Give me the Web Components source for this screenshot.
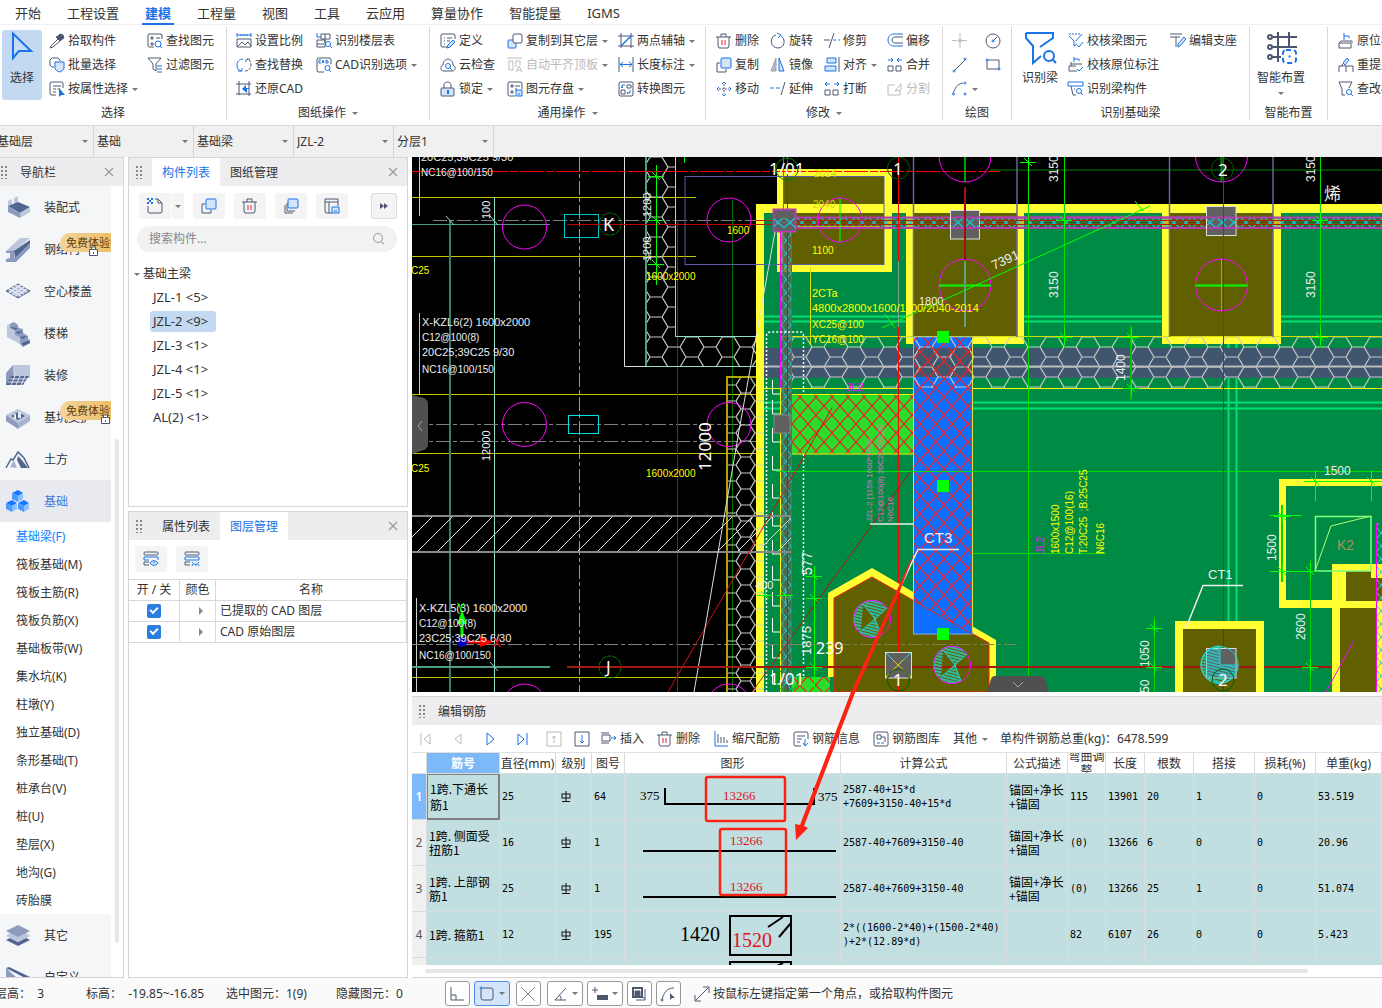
<!DOCTYPE html>
<html lang="zh-CN">
<head>
<meta charset="utf-8">
<title>建模</title>
<style>
html, body {
    margin: 0;
    height: 100%;
    overflow: hidden;
    background: #fff;
    color: #333;
    font: 12px/16px "Noto Sans", "Noto Sans CJK SC", sans-serif;
}
</style>
</head>
<body>
<cad-app></cad-app>

<script>
// ---------- shared ----------
const RESET = `
*, *::before { box-sizing: border-box; }
button, select, input { font: inherit; color: inherit; margin: 0; padding: 0; border: 0; background: none; }
button { cursor: pointer; }
`;

function define(name, css, html) {
    customElements.define(name, class extends HTMLElement {
        constructor() {
            super();
            this.attachShadow({ mode: 'open' });
        }
        connectedCallback() {
            const markup = typeof html === 'function' ? html(this) : html;
            this.shadowRoot.innerHTML = `<style>${RESET}${css}</style>${markup}`;
        }
    });
}

// ---------- icons: dark stroke by default, .b blue, .f pale fill, .w white fill ----------
const ICONS = {
    pointer: [32, '<path class="b" stroke-width="2" fill="#c6dcf7" d="M7 2.500V27l6-7h12z"/>'],
    picker: [16, '<path fill="#4d5870" d="M9 3l2-2 3 1 1 3-3 2-1 1-4-4z"/><path d="M9 6l-7 7-1 2 3-1 7-6"/>'],
    batch: [16, '<path d="M5 10H3L1 8V3l2-2h6l2 2v1"/><path class="b f" d="M6 5h9v6c0 2-2 3-4.500 4C8 14 6 13 6 11z"/>'],
    prop: [16, '<path d="M7 14H2l-1-1V2l1-1h11l1 1v5M4 5h8M4 8h3M8.500 8H11M4 11h3"/><path fill="#1a73e8" stroke="none" d="M10 7v9l2.500-2H16z"/>'],
    find: [16, '<path d="M7 14H2l-1-1V2l1-1h12l1 1v4M4 4h2v2H4zM9 5h4M4 10h2v2H4z"/><circle class="b" cx="11" cy="11" r="3"/><path class="b" d="M13 13l2 2"/>'],
    filter: [16, '<path d="M1 1h13L9 7v7l-3-2V7z"/><path class="b" d="M10 9h5M10 12h5M10 15h5"/>'],
    scale: [16, '<path class="b" d="M1 2h14M1 0v4M15 0v4M5 1v2M8 1v2M11 1v2"/><path d="M1 6h14v8H1zM2 13l4-4 3 3 3-3 3 4"/>'],
    swap: [16, '<path class="b" d="M7 2C3 2 1 5 1 8s1 5 4 6M2 14h4v-3"/><path stroke-dasharray="3 1" d="M9 14c4 0 6-3 6-6s-1-5-4-6M14 2h-4v3"/>'],
    restore: [16, '<path d="M3 0v14M0 3h15M0 13h15M13 0v15"/><path fill="#1a73e8" stroke="none" d="M6 8l4-4v3h3v1h-2v4z"/>'],
    floors: [16, '<path class="b" d="M1 0v4h4"/><path d="M5 1h9v5H5zM9 1v9M1 7h8v7H1zM1 11h7"/><circle class="b" cx="12" cy="11" r="2.500"/><path class="b" d="M14 13l2 2"/>'],
    cadopt: [16, '<path d="M8 15H2l-1-1V2l1-1h12l1 1v5"/><path class="b" d="M5 3H3v3h2M6 6l1-3 1 3M10 3v3h2V4z"/><circle class="b" cx="11.500" cy="11" r="2.500"/><path class="b" d="M13 13l2 2"/>'],
    define: [16, '<path d="M7 14H2l-1-1V2l1-1h12l1 1v4M4 5h1M7 5h5M4 8h1M7 8h3M4 11h1"/><path class="b f" d="M8 12l5-5 2 2-5 5-3 1z"/>'],
    cloud: [16, '<path d="M4 14c-4 0-4-5-1-6 0-4 3-6 5-6s5 2 5 6c3 1 3 6-1 6z"/><circle class="b" cx="8" cy="9" r="2.500"/><path class="b" d="M10 11l2 2"/>'],
    lock: [16, '<path d="M4 7V4c0-4 7-4 7 0v3"/><rect class="f" x="1" y="7" width="13" height="8" rx="1"/><path class="b" stroke-width="2" d="M8 9v4"/>'],
    copyfloor: [16, '<rect class="f b" x="1" y="7" width="8" height="8" rx="1"/><path fill="#fff" d="M6 2l1-1h7l1 1v7l-1 1H7L6 9z"/>'],
    aligntop: [16, '<path d="M0 1h15M2 4h4v9H2zM9 10V4h4v4M9 15l3-6 3 6M10 13h4"/>'],
    store: [16, '<path d="M8 15H2l-1-1V2l1-1h12l1 1v6M4 4h2v2H4zM8 5h5M4 10h2v2H4zM8 8h2"/><path class="b f" d="M9 9h6v6H9zM11 13h2"/>'],
    twopoint: [16, '<path d="M3 0v15M13 0v15M0 3h16M0 13h16"/><path class="b" stroke-width="1.500" d="M3 13L13 3"/>'],
    length: [16, '<path d="M1 0v15M15 0v15"/><path class="b" d="M2 7.500h12M5 5L2 7.500 5 10M11 5l3 2.500-3 2.500"/>'],
    convert: [16, '<path d="M2 1h12l1 1v12l-1 1H2l-1-1V2zM9 4h4v3H9zM3 9h4v4H3z"/><path class="b" d="M7 4H4v3M3 6l1 1 1-1M9 12h3V9M10 13l-1-1 1-1"/>'],
    trash: [16, '<path d="M0 4h15M5 4V1h5v3M2 4v9l1 2h9l1-2V4"/><path stroke="#d9222a" d="M6 7v5M9 7v5"/>'],
    copy: [16, '<path d="M4 6H1v9h9v-3"/><rect class="b f" x="5" y="1" width="10" height="10" rx="1"/>'],
    move: [16, '<path stroke-dasharray="2 1" d="M8 3v10M3 8h10"/><path class="b" d="M6 3l2-2 2 2M6 13l2 2 2-2M3 6L1 8l2 2M13 6l2 2-2 2"/>'],
    rotate: [16, '<path d="M6 2C-1 4 0 15 8 15c7 0 8-9 3-12"/><path class="b" d="M7 0l4 2-3 3"/>'],
    mirror: [16, '<path fill="#b4bac6" stroke="#9aa2b1" d="M6 1v13H1z"/><path class="b f" d="M9 1v13h5z"/>'],
    extend: [16, '<path class="b" stroke-dasharray="4 2" d="M0 7h11"/><path d="M15 1l-4 13"/>'],
    trim: [16, '<path d="M0 7h6M10 0L5 15"/><path class="b" stroke-dasharray="3 2" d="M9 7h7"/>'],
    align: [16, '<path d="M15 0v15"/><path class="b f" d="M3 1h9v5H3zM1 9h11v5H1z"/>'],
    split2: [16, '<path d="M1 9h5v5H1zM9 9h5v5H9z"/><path class="b" d="M1 3h5M3 1L1 3l2 2M15 3h-5M13 1l2 2-2 2"/>'],
    offset: [16, '<path class="b" d="M16 1H7C-1 1-1 13 7 13h9"/><path d="M16 4H8c-4 0-4 6 0 6h8"/>'],
    merge: [16, '<path d="M1 9h5v5H1zM9 9h5v5H9z"/><path class="b" d="M1 3h5M4 1l2 2-2 2M15 3h-5M12 1l-2 2 2 2"/>'],
    divide: [16, '<path d="M8 4H1v10h12v-4M8 10l6-7v6z"/>'],
    point: [16, '<path stroke="#bbb" d="M8 0v5M8 10v5M0 7.500h5M10 7.500h5"/><circle fill="#bbb" stroke="none" cx="8" cy="7.500" r="2"/>'],
    line: [16, '<path d="M2 14L13 3"/><circle class="b w" cx="2" cy="14" r="1"/><circle class="b w" cx="13" cy="2" r="1"/>'],
    arc: [16, '<path d="M1 13C3 7 5 3 11 2"/><circle class="b w" cx="1.500" cy="13" r="1"/><circle class="b w" cx="13" cy="2" r="1"/><circle class="b w" cx="13" cy="13" r="1"/>'],
    circle: [16, '<circle cx="8" cy="8" r="7"/><path d="M8 8l4-4"/><circle class="b" cx="8" cy="8" r="1"/>'],
    rect: [16, '<path d="M2 3h12v9H2z"/><circle class="b w" cx="2" cy="3" r="1"/><circle class="b w" cx="14" cy="12" r="1"/>'],
    beam: [32, '<path class="b" stroke-width="2" d="M2 2h27v5L16 16M2 2v5l7 8v17l8-7"/><circle class="b" stroke-width="2" cx="25" cy="25" r="5"/><path class="b" stroke-width="2" d="M28 28l4 4"/>'],
    checkbeam: [16, '<path class="b" stroke-dasharray="2 1" d="M1 1h12"/><path class="b" d="M1 3l5 5v5l3-2M14 1L8 8M9 12l2 2 4-5"/>'],
    checkpos: [16, '<path class="b" d="M6 5V0M6 2h5v2"/><path d="M3 7h11M3 5v4M1 9h7M1 9v5h8"/><path class="b" d="M9 12l2 2 4-4"/>'],
    recbeam: [16, '<path class="b" d="M0 1h15v4H0z"/><path d="M3 5l2 9h3M7 8h-1"/><circle class="b" cx="11" cy="10" r="2.500"/><path class="b" d="M13 12l2 2"/>'],
    support: [16, '<path d="M0 1h12M0 4h10M6 4v10"/><path class="b f" d="M8 11l6-7 2 2-6 7-2 1z"/>'],
    smart: [32, '<g stroke-width="2"><path d="M6 6h26M6 16h26M6 26h10M13 1v30M24 1v14"/><circle class="w" cx="5" cy="6" r="2"/><circle class="w" cx="5" cy="16" r="2"/><circle class="w" cx="5" cy="26" r="2"/><rect x="18" y="19" width="13" height="13" rx="3" class="b w" stroke-dasharray="5 3"/><path class="b" d="M23.500 25.500h2"/></g>'],
    pos: [16, '<path class="b" d="M6 7V0M6 3h5v2"/><path d="M3 8h11v2M1 10h12v5H1zM3 8l-2 2"/>'],
    refresh: [16, '<path class="b f" d="M5 6l4-5 2 2-4 5z"/><path d="M1 15V9h14v6M8 9v6M3 9l2-2"/>'],
    chk: [16, '<path d="M1 1h13l-3 6M1 1l3 7v6h3"/><circle class="b" cx="11" cy="11" r="2.500"/><path class="b" d="M13 13l2 2"/>'],
    newfile: [16, '<path d="M1 8v6l1 1h12l1-1V5l-4-4H8M11 1v4h4"/><path stroke="none" fill="#1a73e8" d="M0 0h2v2H0zM4 0h2v2H4zM2 2h2v2H2zM0 4h2v2H0zM4 4h2v2H4z"/>'],
    layercopy: [16, '<path d="M4 5v8h8M2 7v8h8"/><rect class="b f" x="5" y="1" width="10" height="9" rx="1"/>'],
    savecomp: [16, '<path d="M8 15H2l-1-1V1h13v7M1 4h13M5 4v11"/><path class="b f" d="M8 9h7v6H8zM10 13h3"/>'],
    forward: [16, '<path stroke="none" fill="#4d5870" d="M4 5l4 3-4 3zM8 5l4 3-4 3z"/>'],
    search: [16, '<circle stroke="#999" cx="7" cy="7" r="4.500"/><path stroke="#999" d="M10 11l3 2"/>'],
    layeron: [16, '<rect x="1" y="1" width="14" height="3" rx="1"/><path class="b" d="M6 9H1V6h14v3"/><path d="M6 14H1v-3h5"/><path class="b f" d="M7 12c2-3 6-3 8 0-2 3-6 3-8 0zM11 11v1"/>'],
    layeroff: [16, '<rect x="1" y="1" width="14" height="3" rx="1"/><path class="b" d="M15 9H1V6h14v3"/><path d="M6 14H1v-3h5"/><path class="b" d="M8 11c2 3 5 3 7 0M9 13l-1 2M12 13v2M14 13l1 2"/>'],
    first: [16, '<path stroke="#bbb" d="M3 2v12M12 3L6 8l6 5z"/>'],
    prev: [16, '<path stroke="#bbb" d="M11 3L5 8l6 5z"/>'],
    next: [16, '<path class="b" d="M5 2v12l7-6z"/>'],
    last: [16, '<path class="b" d="M4 3v11l6-6zM13 2v12"/>'],
    up: [16, '<path stroke="#bbb" d="M1 1h14v14H1zM8 12V5M6 7l2-2 2 2"/>'],
    down: [16, '<path d="M1 1h14v14H1z"/><path class="b" d="M8 4v8M6 10l2 2 2-2"/>'],
    insert: [16, '<path d="M0 2h8M1 4h8v6H1zM0 12h8"/><path class="b" d="M10 7h5M13 5l2 2-2 2"/>'],
    ruler: [16, '<path class="b" d="M2 0v15h13"/><path d="M5 3v9M8 6v6M11 6v6M14 9v3"/>'],
    info: [16, '<path d="M8 15H2l-1-1V2l1-1h12l1 1v6M4 5h8M4 8h5M4 11h3"/><path class="b" d="M12 8v6M10 12l2 3 3-3"/>'],
    lib: [16, '<path d="M2 1h12l1 1v12l-1 1H2l-1-1V2zM4 4h4v4H4zM8 6h4v5"/><path class="b" stroke-dasharray="3 1" d="M4 12h8"/>'],
    ortho: [16, '<path d="M2 1v13h13M2 9h5v5"/>'],
    snaprect: [16, '<rect x="2" y="2" width="12" height="12" rx="2"/><circle class="b w" cx="2" cy="2" r="1"/>'],
    cross: [16, '<path stroke="#888" d="M1 1l14 14M15 1L1 15"/>'],
    angle: [16, '<path d="M14 2L3 14h11M7 9c2 1 2 3 2 5"/>'],
    plusbox: [16, '<path d="M3 1v6M0 4h6"/><path fill="#4d5870" stroke="none" d="M5 9h11v5H5z"/>'],
    selbox: [16, '<path stroke-width="2" d="M2 2h9v9H2z"/><path d="M14 3v11H5"/><path fill="#4d5870" d="M4 5h5v5H4zM10 9l4 4"/>'],
    curve: [16, '<path d="M2 15C3 7 7 2 14 2"/><circle class="w" cx="2" cy="14" r="1"/><path fill="#4d5870" stroke="none" d="M10 7v7l2-2h3z"/>'],
    diag: [16, '<path d="M2 14L14 2M9 1h6v6M1 9v6h6"/>'],
    // navigation pictograms
    n1: [24, '<g stroke="none"><path fill="#bcc6dc" d="M2 5l4-2v6L2 10zM8 2l4-2v6L8 8z"/><path fill="#50658f" d="M2 10l10-4 12 5-10 6z"/><path fill="#8c9bbd" d="M2 10l12 7v5L2 16z"/><path fill="#bcc6dc" d="M14 17l10-6v5l-10 6z"/></g>'],
    n2: [24, '<g stroke="none"><path fill="#bcc6dc" d="M0 13L14 0h10L10 12z"/><path fill="#8c9bbd" d="M0 13l10-1v2H8v6L24 4v6L10 24H0v-3l4-1v-5H0z"/><path fill="#50658f" d="M8 13L24 2v3L9 20z"/></g>'],
    n3: [24, '<path fill="#8c9bbd" stroke="#50658f" d="M12 4l12 7-12 7L0 11z"/><path stroke="#dfe4ef" stroke-width="2" d="M3 9l12 7M6 7l12 7M9 5l12 7M15 5L3 13M18 7L6 15M21 9L9 16"/>'],
    n4: [24, '<g stroke="none"><path fill="#bcc6dc" d="M1 3l7-3 16 18-8 5L1 15z"/><path fill="#8c9bbd" d="M4 2l4-2 4 3v3l5 1v4l5 3v4l2 3-7 4-3-3V15l-5-2V8L4 6z"/><path fill="#50658f" d="M4 5l8 1-3 2zM9 10l8-1-4 3zM13 15l8-1-4 3zM16 21l8-3v3l-7 3z"/></g>'],
    n5: [24, '<path fill="#bcc6dc" stroke="none" d="M7 1h17v13L9 14z"/><path fill="#8c9bbd" stroke="none" d="M7 1L0 9v12l8-8z"/><path fill="#50658f" stroke="none" d="M5 12h18l-6 9H0z"/><path stroke="#dfe4ef" d="M4 15h18M2 18h18M9 12l-4 9M14 12l-4 9M19 12l-4 9"/>'],
    n6: [24, '<g stroke="none"><path fill="#bcc6dc" d="M12 3l12 6-12 8L0 9z"/><path fill="#50658f" d="M12 6l7 4-7 4-7-4z"/><path fill="#8c9bbd" d="M0 9l12 8v6L0 15z"/><path fill="#a5b2cd" d="M12 17l12-8v6l-12 8z"/><path fill="#e6eaf2" d="M8 8h2v5H8zM12 6h3v6h-3z"/></g>'],
    n7: [24, '<path stroke="#50658f" stroke-width="1.500" d="M0 20L5 11l2 1L12 4l6 6 5 10"/><path stroke="none" fill="#50658f" d="M12 8l3 3 7 9h-7l-4-8z"/><path stroke="none" fill="#a5b2cd" d="M4 19l4-7 3 8z"/>'],
    n8: [24, '<g stroke="none"><path fill="#1677ff" d="M12 0l5 3-5 3-6-3zM6 10l5 3-5 3-6-3zM18 10l5 3-5 3-6-3z"/><path fill="#4b9bff" d="M6 3l6 3v6L6 9zM0 13l6 3v6l-6-3zM12 13l6 3v6l-6-3z"/><path fill="#8cc0ff" d="M12 6l5-3v6l-5 3zM6 16l5-3v6l-5 3zM18 16l5-3v6l-5 3z"/></g>'],
    n9: [24, '<g stroke="none"><path fill="#50658f" d="M0 16l12 6 12-6-4-2-8 4-8-4z"/><path fill="#bcc6dc" d="M0 12l12 6 12-6-4-3H4z"/><path fill="#8c9bbd" d="M12 1l12 6-12 6L0 7z"/></g>'],
    n10: [24, '<g stroke="none"><path fill="#8c9bbd" d="M0 2v22h8V12l6 4v8h10z"/><path fill="#50658f" d="M0 2l3-1 21 10-3 2z"/></g>'],
};

define('ui-icon', `
:host { display: inline-block; flex: none; line-height: 0; }
svg { display: block; overflow: visible; fill: none; stroke: #4d5870; stroke-width: 1; }
.b { stroke: #1a73e8; }
.f { fill: #d3e4fb; }
.w { fill: #fff; }
:host([muted]) svg, :host([muted]) .b { stroke: #bbb; }
`, el => {
    const [size, body] = ICONS[el.getAttribute('name')];
    return `<svg width="${size}" height="${size}" viewBox="0 0 ${size} ${size}" aria-hidden="true">${body}</svg>`;
});

define('ui-caret', `
:host { display: inline-block; flex: none; width: 0; border: 3px solid transparent; border-top-color: #777; border-bottom: 0; }
:host([side]) { border: 4px solid transparent; border-left: 4px solid #888; border-right: 0; }
`, '');

// ---------- top menu ----------
define('menu-tabs', `
:host { display: block; border-bottom: 1px solid #f0f0f0; background: #fff; }
nav { display: flex; gap: 20px; padding-left: 12px; height: 24px; }
a { padding: 0 3px; font-size: 13px; line-height: 26px; color: #333; text-decoration: none; white-space: nowrap; height: 25px; }
a.on { color: #1a73e8; font-weight: 600; border-bottom: 2px solid #1a73e8; }
`, () => '<nav>' + ['开始', '工程设置', '建模', '工程量', '视图', '工具', '云应用', '算量协作', '智能提量', 'IGMS']
    .map(t => `<a href="#"${t === '建模' ? ' class="on"' : ''}>${t}</a>`).join('') + '</nav>');

// ---------- ribbon ----------
define('tool-item', `
:host { display: flex; }
button { display: flex; align-items: center; gap: 3px; height: 24px; white-space: nowrap; }
button:disabled { color: #bbb; }
ui-caret { margin-left: 1px; }
`, el => `<button${el.hasAttribute('muted') ? ' disabled' : ''} aria-label="${el.textContent || el.getAttribute('icon')}">
<ui-icon name="${el.getAttribute('icon')}"${el.hasAttribute('muted') ? ' muted' : ''}></ui-icon><slot></slot>
${el.hasAttribute('caret') ? '<ui-caret></ui-caret>' : ''}</button>`);

define('tool-big', `
:host { display: flex; }
button { display: flex; flex-direction: column; align-items: center; width: 100%; height: 70px; margin-top: 1px; padding-top: 1px; border-radius: 3px; white-space: nowrap; }
span { margin-top: 7px; }
ui-caret { margin-top: 6px; }
:host([on]) button { background: #c2d9f1; }
`, el => `<button><ui-icon name="${el.getAttribute('icon')}"></ui-icon><span><slot></slot></span>
${el.hasAttribute('caret') ? '<ui-caret></ui-caret>' : ''}</button>`);

define('ribbon-group', `
:host { display: flex; flex: none; flex-direction: column; margin: 2px 0 5px; padding-top: 2px; border-right: 1px solid #d9d9d9; }
:host(:last-child) { border: 0; }
.body { display: flex; height: 72px; }
.title { display: flex; flex: none; align-items: center; justify-content: center; gap: 6px; height: 24px; margin-bottom: -5px; }
`, el => `<div class="body"><slot></slot></div>
<div class="title">${el.getAttribute('label') || ''}${el.hasAttribute('caret') ? '<ui-caret></ui-caret>' : ''}</div>`);

// item: icon, text, flags (c = caret, m = muted); the number before items is the column width
const RIBBON = [
    { label: '选择', pad: 2, big: ['pointer', '选择', 40, 7, 'on'], cols: [
        [98, 'picker 拾取构件', 'batch 批量选择', 'prop 按属性选择 c'],
        [79, 'find 查找图元', 'filter 过滤图元']] },
    { label: '图纸操作', caret: 1, pad: 9, cols: [
        [80, 'scale 设置比例', 'swap 查找替换', 'restore 还原CAD'],
        [113, 'floors 识别楼层表', 'cadopt CAD识别选项 c']] },
    { label: '通用操作', caret: 1, pad: 10, cols: [
        [67, 'define 定义', 'cloud 云检查', 'lock 锁定 c'],
        [111, 'copyfloor 复制到其它层 c', 'aligntop 自动平齐顶板 cm', 'store 图元存盘 c'],
        [87, 'twopoint 两点辅轴 c', 'length 长度标注 c', 'convert 转换图元']] },
    { label: '修改', caret: 1, pad: 10, cols: [
        [54, 'trash 删除', 'copy 复制', 'move 移动'],
        [54, 'rotate 旋转', 'mirror 镜像', 'extend 延伸'],
        [63, 'trim 修剪', 'align 对齐 c', 'split2 打断'],
        [55, 'offset 偏移', 'merge 合并', 'divide 分割 m']] },
    { label: '绘图', pad: 9, cols: [
        [33, 'point', 'line', 'arc  c'],
        [26, 'circle', 'rect']] },
    { label: '识别基础梁', pad: 9, big: ['beam', '识别梁', 38, 9, ''], cols: [
        [102, 'checkbeam 校核梁图元', 'checkpos 校核原位标注', 'recbeam 识别梁构件'],
        [79, 'support 编辑支座']] },
    { label: '智能布置', pad: 6, big: ['smart', '智能布置', 50, 21, 'caret'], cols: [] },
    { label: '', pad: 10, cols: [
        [90, 'pos 原位标注', 'refresh 重提梁跨', 'chk 查改标高']] },
];

define('ribbon-bar', `
:host { display: flex; overflow: hidden; background: #fff; border-bottom: 1px solid #d9d9d9; }
.row { display: flex; }
.col { display: flex; flex-direction: column; }
`, () => RIBBON.map(g => {
    const big = g.big ? `<tool-big icon="${g.big[0]}" ${g.big[4]} style="width:${g.big[2]}px;margin-right:${g.big[3]}px">${g.big[1]}</tool-big>` : '';
    const cols = g.cols.map(([w, ...items]) => `<div class="col" style="width:${w}px">` + items.map(s => {
        const [icon, text = '', flags = ''] = s.split(' ');
        return `<tool-item icon="${icon}"${flags.includes('c') ? ' caret' : ''}${flags.includes('m') ? ' muted' : ''}>${text}</tool-item>`;
    }).join('') + '</div>').join('');
    return `<ribbon-group label="${g.label}"${g.caret ? ' caret' : ''}><div class="row" style="padding-left:${g.pad}px">${big}${cols}</div></ribbon-group>`;
}).join(''));

// ---------- selector bar ----------
define('drop-select', `
:host { display: flex; flex: none; align-items: center; width: 100px; border-right: 1px solid #d5d5d5; padding: 0 5px 0 3px; }
select { appearance: none; flex: 1; min-width: 0; height: 28px; outline: 0; }
`, el => `<select aria-label="${el.getAttribute('label')}"><option>${el.getAttribute('value')}</option></select><ui-caret></ui-caret>`);

define('selector-bar', `
:host { display: block; height: 31px; background: #f0f0f0; overflow: hidden; }
.row { display: flex; height: 31px; margin-left: -6px; }
`, () => '<div class="row">' + [['楼层', '基础层'], ['类别', '基础'], ['类型', '基础梁'], ['构件', 'JZL-2'], ['分层', '分层1']]
    .map(([l, v]) => `<drop-select label="${l}" value="${v}"></drop-select>`).join('') + '</div>');

// ---------- docked panels ----------
define('dock-panel', `
:host { display: flex; flex-direction: column; min-height: 0; min-width: 0; overflow: hidden; border: 1px solid #d5d5d5; background: #fff; }
header { display: flex; align-items: center; flex: none; height: 28px; background: #ededf0; }
.grip { width: 7px; height: 14px; margin: 0 10px 0 6px; background: radial-gradient(circle, #888 1px, transparent 1px) 0 0 / 4px 4px; }
:host([edge]) .grip { margin: 0 13px 0 0; }
:host([plain]) .grip { margin-right: 13px; }
:host([edge]) { border-left: 0; }
.tab { height: 28px; padding: 0 10px; line-height: 30px; }
:host([edge]) .tab, :host([plain]) .tab { padding: 0; }
.tab.on { background: #fff; color: #1a73e8; }
.x { margin-left: auto; margin-right: 9px; width: 10px; height: 10px; }
.x svg { display: block; }
.body { display: flex; flex-direction: column; flex: 1; min-height: 0; }
`, el => {
    const tabs = el.getAttribute('tabs').split(',');
    const on = el.getAttribute('active');
    return `<header><span class="grip"></span>
${tabs.map(t => `<button class="tab${t === on ? ' on' : ''}">${t}</button>`).join('')}
${el.hasAttribute('plain') ? '' : '<button class="x" aria-label="关闭"><svg width="10" height="10" stroke="#999" stroke-width="1.200"><path d="M1 1l8 8M9 1L1 9"/></svg></button>'}
</header><div class="body"><slot></slot></div>`;
});

define('nav-item', `
:host { display: block; position: relative; background: #f5f6f8; }
a { display: flex; align-items: center; gap: 14px; height: 42px; padding: 2px 0 0 6px; color: inherit; text-decoration: none; white-space: nowrap; }
:host([on]) { background: #e8eaf0; color: #3f78e0; }
b { position: absolute; right: 0; top: 5px; width: 51px; padding-left: 6px; line-height: 19px; height: 19px; border-radius: 10px 0 0 8px; background: linear-gradient(90deg, #f5d49a, #ecc06a); color: #5c3a10; font-weight: 400; font-size: 11px; white-space: nowrap; }
svg { position: absolute; top: 18px; right: 13px; }
:host([far]) svg { right: 1px; }
`, el => `<a href="#"><ui-icon name="${el.getAttribute('icon')}"></ui-icon><slot></slot></a>
${el.hasAttribute('trial') ? '<b>免费体验</b><svg width="9" height="10" fill="#fff" stroke="#4d5870"><path d="M2.500 4V1h4v3M.5 3.500h8v6h-8zM4.500 6v2"/></svg>' : ''}`);

define('nav-list', `
:host { display: flex; flex: 1; min-height: 0; overflow: hidden; }
.list { flex: 1; min-width: 0; }
.sub { display: block; height: 28px; padding-left: 16px; line-height: 30px; color: inherit; text-decoration: none; white-space: nowrap; }
.sub.on { color: #0a84ff; }
.bar { width: 4px; height: 504px; margin: 253px 4px 0; border-radius: 2px; background: #e6e6e6; }
`, () => {
    const sub = ['基础梁(F)', '筏板基础(M)', '筏板主筋(R)', '筏板负筋(X)', '基础板带(W)', '集水坑(K)', '柱墩(Y)', '独立基础(D)',
        '条形基础(T)', '桩承台(V)', '桩(U)', '垫层(X)', '地沟(G)', '砖胎膜'];
    return `<div class="list">
<nav-item icon="n1">装配式</nav-item>
<nav-item icon="n2" trial>钢结构</nav-item>
<nav-item icon="n3">空心楼盖</nav-item>
<nav-item icon="n4">楼梯</nav-item>
<nav-item icon="n5">装修</nav-item>
<nav-item icon="n6" trial far>基坑支护</nav-item>
<nav-item icon="n7">土方</nav-item>
<nav-item icon="n8" on>基础</nav-item>
${sub.map((t, i) => `<a href="#" class="sub${i ? '' : ' on'}">${t}</a>`).join('')}
<nav-item icon="n9">其它</nav-item>
<nav-item icon="n10">自定义</nav-item>
</div><div class="bar"></div>`;
});

define('component-list', `
:host { display: block; padding: 7px 10px 0 8px; }
.tools { display: flex; gap: 9px; padding-left: 2px; }
.tools button { display: grid; place-items: center; width: 32px; height: 26px; border-radius: 3px; background: #f4f4f4; }
.tools .drop { width: 12px; margin-left: -8px; }
.tools .more { width: 26px; margin-left: auto; border: 1px solid #ddd; }
label { display: flex; align-items: center; height: 26px; margin-top: 7px; padding: 0 10px 0 12px; border-radius: 13px; background: #f2f2f2; }
input { flex: 1; min-width: 0; outline: 0; }
input::placeholder { color: #888; opacity: 1; }
ul { list-style: none; margin: 0; padding: 0; }
.root { display: flex; align-items: center; gap: 3px; margin-top: 10px; height: 24px; margin-left: -3px; }
li { height: 24px; padding: 1px 0 0 13px; font-size: 13px; }
li span { display: inline-block; height: 21px; padding: 0 8px 0 3px; line-height: 20px; border-radius: 3px; white-space: pre; }
li.on span { background: #c2d9f1; }
`, () => `<div class="tools"><button aria-label="新建"><ui-icon name="newfile"></ui-icon></button><button class="drop" aria-label="更多新建"><ui-caret></ui-caret></button>
${[['copy', '复制'], ['trash', '删除'], ['layercopy', '层间复制'], ['savecomp', '构件存盘']].map(([i, t]) => `<button aria-label="${t}"><ui-icon name="${i}"></ui-icon></button>`).join('')}
<button class="more" aria-label="更多"><ui-icon name="forward"></ui-icon></button></div>
<label><input placeholder="搜索构件..." aria-label="搜索构件"><ui-icon name="search"></ui-icon></label>
<div class="root"><ui-caret></ui-caret>基础主梁</div>
<ul>${['JZL-1 <5>', 'JZL-2 <9>', 'JZL-3 <1>', 'JZL-4 <1>', 'JZL-5 <1>', 'AL(2) <1>']
    .map((t, i) => `<li${i === 1 ? ' class="on"' : ''}><span>${t.replace('<', '&lt;')}</span></li>`).join('')}</ul>`);

define('layer-table', `
:host { display: block; }
.tools { display: flex; gap: 9px; padding: 6px; height: 39px; }
.tools button { display: grid; place-items: center; width: 32px; height: 26px; border-radius: 3px; background: #f4f4f4; }
table { width: 100%; table-layout: fixed; border-spacing: 0; border-top: 1px solid #d9d9d9; }
th, td { height: 21px; padding: 0 4px; border-right: 1px solid #d9d9d9; border-bottom: 1px solid #d9d9d9; font-weight: 400; text-align: left; line-height: 16px; white-space: nowrap; }
th { text-align: center; padding: 0; }
.c { text-align: center; }
td.arrow { padding-left: 10px; }
input { appearance: none; display: block; width: 14px; height: 14px; margin: 0 auto; border-radius: 2px; background: #2a7de1; position: relative; }
input::after { content: ""; position: absolute; left: 3px; top: 3px; width: 6px; height: 3px; border: solid #fff; border-width: 0 0 2px 2px; transform: rotate(-45deg); }
`, `<div class="tools"><button aria-label="显示图层"><ui-icon name="layeron"></ui-icon></button><button aria-label="隐藏图层"><ui-icon name="layeroff"></ui-icon></button></div>
<table><colgroup><col style="width:51px"><col style="width:36px"><col></colgroup>
<thead><tr><th>开 / 关</th><th>颜色</th><th>名称</th></tr></thead>
<tbody>
<tr><td class="c"><input type="checkbox" checked aria-label="已提取的 CAD 图层"></td><td class="c arrow"><ui-caret side></ui-caret></td><td>已提取的 CAD 图层</td></tr>
<tr><td class="c"><input type="checkbox" checked aria-label="CAD 原始图层"></td><td class="c arrow"><ui-caret side></ui-caret></td><td>CAD 原始图层</td></tr>
</tbody></table>`);

// ---------- drawing ----------
const line = (x1, y1, x2, y2, c, w = 1, extra = '') => `<path d="M${x1} ${y1}L${x2} ${y2}" stroke="${c}" stroke-width="${w}" ${extra}/>`;
const box = (x1, y1, x2, y2, f, s = 'none', extra = '') => `<rect x="${x1}" y="${y1}" width="${x2 - x1}" height="${y2 - y1}" fill="${f}" stroke="${s}" ${extra}/>`;
const ring = (x, y, r, c = '#f0f', extra = '') => `<circle cx="${x}" cy="${y}" r="${r}" stroke="${c}" ${extra}/>`;
const text = (x, y, t, c = '#eee', size = 11, rot = 0, cls = '') =>
    `<text x="${x}" y="${y}" fill="${c}" font-size="${size}" class="${cls}"${rot ? ` transform="rotate(${rot} ${x} ${y})"` : ''}>${t}</text>`;
const tick = (x, y, c = '#0f0') => `<path stroke="${c}" d="M${x - 4} ${y - 4}l8 8M${x - 8} ${y + .5}h16M${x + .5} ${y - 8}v16"/>`;

function drawing() {
    const Y = '#ffff32', G = '#008b45', O = '#606000', g = '#00ff00', dash = 'stroke-dasharray="14 3 4 3"';
    const y = '#ffff00', gray = '#808080', teal = '#4c9c88', lite = '#00e070';
    let s = '';
    // axes and outlines on the open sheet
    for (const ly of [197.5, 256.5]) s += line(412, ly, 696, ly, '#c8c800');
    for (const ly of [394.5, 453.5, 677.5]) s += line(412, ly, 757, ly, '#c8c800');
    s += line(419.5, 157, 419.5, 216, '#ccc') + line(419.5, 313, 419.5, 395, '#ccc') + line(416.5, 598, 416.5, 692, '#ccc');
    s += line(450, 220, 450, 692, '#3c7a6c', 2) + line(494.5, 197, 494.5, 692, '#8fe0cc') + line(412, 224.5, 550, 224.5, teal) + line(412, 667, 550, 667, teal, 2);
    s += line(433, 220.5, 790, 220.5, gray, 1, dash) + line(412, 424.5, 1016, 424.5, gray, 1, dash) + line(412, 441.5, 1016, 441.5, gray, 1, dash)
        + line(412, 644.5, 790, 644.5, gray, 1, dash) + line(579.5, 157, 579.5, 692, '#999', 1, dash);
    s += '<path stroke="#8fe0cc" d="M490 216l8 9M446 216l8 9M490 662l8 9"/>';
    s += line(677.5, 220, 677.5, 692, '#006400') + line(732.5, 200, 732.5, 692, '#007800');
    // wall with honeycomb fill
    s += box(646, 157, 675, 366, 'url(#hex)') + box(675, 337, 764, 366, 'url(#hex)');
    s += line(646, 157, 646, 366, teal, 2) + '<path stroke="#8fe0cc" d="M675.5 157V336.500H790M646 366.500H764"/><path stroke="#ddd" d="M624.5 157V366.500H646"/>';
    s += box(727, 377, 757, 692, 'url(#hexs)') + '<path stroke="#b0a800" stroke-width="2" d="M727 692V377H757"/>';
    s += ring(524.5, 227, 22) + ring(729, 220, 22) + ring(524.5, 424.5, 22) + ring(729, 424.5, 22) + ring(524.5, 706, 22) + ring(729, 706, 22);
    s += box(564.5, 214.5, 598.5, 237.5, 'none', '#00c8c8') + box(568.5, 415.5, 598.5, 433.5, 'none', '#00e0e0');
    s += ring(610, 224, 11, '#008000', 'stroke-dasharray="5 1"') + ring(610, 667, 11, '#008000', 'stroke-dasharray="5 1"');
    s += line(567, 224.5, 790, 224.5, '#c00000');
    s += line(656.5, 165, 656.5, 285, g) + tick(656, 176) + tick(656, 220) + tick(656, 264) + line(684.5, 157, 684.5, 163, g);
    s += line(990, 170, 1382, 170, '#004000', 2);

    // slab
    s += `<path fill="${Y}" d="M756 204H1382V692H756z"/>` + box(764, 213, 1382, 692, G);
    for (const ly of [316.5, 321.5, 402.5, 408.5]) s += line(764, ly, 1382, ly, lite, 2);
    s += line(1228.5, 344, 1228.5, 622, lite, 2) + line(1236.5, 344, 1236.5, 622, lite, 2);
    s += box(764, 348, 1382, 378, '#3f566e');
    // pile caps
    s += box(777, 169, 892, 272, Y) + box(784, 176, 884, 265, O) + box(784, 204, 892, 213, Y);
    s += box(906, 204, 1024, 344, Y) + box(913, 213, 1017, 337, O) + box(1162, 204, 1281, 344, Y) + box(1169, 213, 1273, 337, O);
    s += box(792, 337, 1382, 388, 'url(#hex)') + line(764, 366.5, 1382, 366.5, '#bbb', 2);
    s += line(780, 336.5, 1382, 336.5, '#d8e000') + line(764, 388.5, 1382, 388.5, y);
    s += box(685, 176.5, 884, 264.5, 'none', '#5a5aa8');
    for (const px of [913.5, 1017, 1169.5, 1273]) s += line(px, 157, px, 337, '#6464a0', 1.5);
    s += line(412, 171.5, 1000, 171.5, '#f00', 1, 'stroke-dasharray="24 2 8 2"');
    // top truss
    s += box(781, 217, 1382, 228, '#803000', 'none', 'opacity=".35"') + box(796, 217, 1382, 228, 'url(#zig)');
    s += line(781, 217.5, 1382, 217.5, '#b040b0', 2) + line(781, 228, 1382, 228, '#b040b0', 2) + line(756, 220.5, 1382, 220.5, '#b02010') + line(756, 224.5, 1382, 224.5, '#b02010');
    // left truss
    s += box(781, 228, 791, 692, '#5c6450', 'none', 'opacity=".8"') + box(781, 228, 791, 692, 'url(#zigv)');
    s += line(780.5, 216, 780.5, 388, '#f0f') + line(780.5, 388, 780.5, 692, y) + line(791.5, 228, 791.5, 692, '#f0f') + line(787.5, 157, 787.5, 692, '#b02010') + line(783.5, 157, 783.5, 692, '#707050');
    s += '<path stroke="#fff" stroke-dasharray="2 2" stroke-width="1.500" d="M766.5 692V336q0-4 4-4h30q3 0 3 4V692"/>'
        + `<path stroke="#fff" d="${[380, 400, 428, 456, 484, 512, 540, 566, 592, 618, 644, 670].map(v => `M772.500 ${v}v14h8`).join('')}"/>`;
    s += box(757, 388, 764, 692, 'url(#hexs)');
    s += box(412, 515, 791, 552, 'url(#diag)') + line(412, 516, 791, 516, '#888', 2) + line(412, 552, 791, 552, '#888', 2);
    // column marks
    s += box(773.5, 209.5, 795.5, 231.5, '#606060', '#b040b0', 'stroke-width="2"') + box(950.5, 210.5, 979.5, 239, '#606060', '#ddd') + box(1206.5, 206.5, 1236, 235.5, '#606060', '#ddd')
        + box(774, 415, 790, 433, '#606060', '#888');
    s += box(951, 218, 980, 228, 'url(#zig)') + box(1207, 218, 1236, 228, 'url(#zig)') + box(774, 218, 796, 228, 'url(#zig)');
    s += line(951, 217.5, 1236, 217.5, '#b040b0', 2) + line(951, 228, 980, 228, '#b040b0', 2) + line(1207, 228, 1236, 228, '#b040b0', 2);
    s += ring(840, 220, 22) + line(840, 198, 840, 242, g) + line(797, 226.5, 880, 226.5, '#b0b000');
    for (const cx of [965, 1221.5]) {
        s += ring(cx, 285, 26) + line(cx - 26, 285.5, cx + 26, 285.5, g, 2) + ring(cx, 156, 26) + line(cx, 157, cx, 182, '#00a000', 2);
    }
    s += line(1221.5, 259, 1221.5, 311, g) + line(965, 187, 965, 260, '#a01010', 2) + line(965, 261, 965, 327, '#5aa088', 2);
    // green beam and the selected beam
    s += box(792, 394.5, 913, 453.5, '#2bdc2b') + box(792, 394.5, 913, 453.5, 'url(#dia)') + line(792, 454, 913, 454, y) + line(792, 394.5, 913, 394.5, y);
    s += box(792, 677, 830, 692, '#2bdc2b') + box(792, 677, 830, 692, 'url(#dia)');
    s += line(898.5, 157, 898.5, 692, '#f00') + line(898.5, 261, 898.5, 327, '#7aa088');
    s += `<path fill="${Y}" d="M828 593L872 568 996 640V677L989 692H834V677H828z"/><path fill="${O}" stroke="#f02010" d="M834 692V598L872 577 989 643V692z"/>`;
    s += line(898.5, 590, 898.5, 692, '#f00');
    s += box(913.5, 337, 972.5, 634, '#0f70ff', '#7ab0f0') + box(914, 348, 972, 377, '#3f566e') + box(914, 337, 972, 388, 'url(#hex)')
        + '<path fill="url(#dia)" d="M914 337H972V634L914 601z"/>' + line(914, 601, 972, 634, '#e02020') + line(972.5, 337, 972.5, 632, '#e0e040') + line(913.5, 388, 913.5, 600, '#e0e040');
    s += line(668, 692, 832, 408, '#d01010') + line(752, 692, 913, 468, '#c01010');
    s += line(775, 232, 740, 425, '#ddd') + line(740, 425, 694, 692, '#ddd');
    // green dimension lines
    s += line(1028.5, 157, 1028.5, 692, '#00e000') + line(1064.5, 157, 1064.5, 348, '#00e000') + line(1320.5, 157, 1320.5, 348, '#00e000') + line(1131, 326, 1131, 400, '#00c000', 2);
    s += tick(1064, 220) + tick(1320, 220) + tick(1064, 337) + tick(1320, 337) + tick(1131, 337) + tick(1131, 388) + tick(1028, 162);
    s += line(776, 471.5, 1382, 471.5, '#00e000') + line(973, 553.5, 1106, 553.5, '#00e000');
    s += line(882, 328, 1150, 206, g) + `<path stroke="${g}" d="M885 314l10 14M1135 201l8 10"/>`;
    s += line(1223.5, 157, 1223.5, 692, '#c01810') + line(567, 667, 1382, 667, '#a01810', 2);
    s += line(814.5, 566, 814.5, 692, g) + tick(814, 576) + tick(814, 598) + tick(785, 595) + tick(765, 595) + line(810.5, 267, 810.5, 345, '#e0e000') + tick(814, 667);
    s += line(764, 644.5, 1016, 644.5, '#808060', 1, dash);
    s += box(937, 331, 949, 343, g) + box(937, 480, 949, 492, g) + box(937, 628, 949, 640, g);
    // cap contents
    for (const [cx, cy] of [[872, 619], [952, 665]]) {
        s += `<path fill="url(#hatch)" stroke="#20d8d8" d="M${cx + 3} ${cy}L${cx + 15} ${cy - 11}A18.500 18.500 0 1 0 ${cx + 9} ${cy + 16}zM${cx - 9} ${cy - 15}L${cx + 3} ${cy}L${cx - 11} ${cy + 12}"/>` + ring(cx, cy, 18.5);
    }
    s += box(885.5, 652.5, 911.5, 678, '#606060', '#ddd') + '<path stroke="#20d8d8" d="M886 653l12 12M911 653l-13 12"/><path stroke="#e0d000" d="M893 660l5 5 5-5M898 665l-12 12M898 665l13 12"/>';
    s += ring(898.5, 680, 11, '#005800') + ring(898.5, 168, 11, '#006000') + ring(1222.5, 169, 11, '#006000') + ring(787, 169, 11, '#008000') + ring(787, 680, 11, '#00a000');
    s += box(1175, 621, 1264, 692, Y) + box(1183, 629, 1256, 692, O) + line(1223.5, 629, 1223.5, 692, '#a01810') + line(1183, 667, 1256, 667, '#a01810', 2);
    s += box(1206.5, 648.5, 1236, 678, '#606060', '#ddd') + '<path fill="url(#hatch)" stroke="#20d8d8" d="M1220 665V646A18.500 18.500 0 1 0 1238 665z"/>' + ring(1219.5, 665, 18.5, '#20d8d8') + ring(1223, 680, 11, '#006000');
    s += line(1154.5, 617, 1154.5, 692, '#00d000') + tick(1154, 628) + tick(1154, 667);
    // pit K2
    s += `<path fill="${Y}" fill-rule="evenodd" d="M1279 479H1382V486H1286V600H1382V608H1279z"/>` + box(1332, 564, 1382, 692, Y) + box(1346, 571, 1371, 601, O) + box(1371, 578, 1382, 601, O) + box(1340, 608, 1376, 692, O);
    s += box(1376, 523, 1382, 692, 'url(#zigv)') + line(1376.5, 523, 1376.5, 692, '#f0f') + line(1326, 692, 1353, 642, '#f0f');
    s += box(1315.5, 516.5, 1371, 571, 'none', '#80ff80', 'stroke-width="1.500"') + '<path stroke="#b0ff70" d="M1315 571L1331 526 1371 516"/>';
    s += line(1304, 481.5, 1382, 481.5, g) + line(1315.5, 470, 1315.5, 501, g) + line(1371.5, 470, 1371.5, 501, g) + line(1282, 505, 1282, 582, '#00d000', 2) + line(1310.5, 560, 1310.5, 692, '#00d000')
        + line(1270, 515.5, 1302, 515.5, g) + line(1270, 571.5, 1315, 571.5, g) + tick(1315, 481) + tick(1371, 481) + tick(1282, 516) + tick(1282, 571) + tick(1310, 571) + tick(1310, 667);
    // leaders
    s += '<path stroke="#eee" d="M899 590L918 549.500H959M1186 628L1203 585.500H1243M870 524H913" stroke-width="1.500"/>';
    // axis tripod
    s += line(462, 642, 462, 622, '#0f0', 3) + '<path fill="#0f0" d="M462 610l5 14h-10z"/>' + line(462, 642, 482, 642, '#f00', 3) + '<path fill="#f00" d="M494 642l-14 5v-10z"/><circle cx="462" cy="642" r="5" fill="#0000c0"/>';

    // lettering
    const note = (x, ys, rows) => rows.map((t, i) => text(x, ys[i], t, '#eee', t.includes('@') ? 10 : 11)).join('');
    s += note(421, [161, 176], ['20C25;39C25 9/30', 'NC16@100/150']);
    s += note(422, [326, 341, 356, 373], ['X-KZL6(2) 1600x2000', 'C12@100(8)', '20C25;39C25 9/30', 'NC16@100/150']);
    s += note(419, [612, 627, 642, 659], ['X-KZL5(3) 1600x2000', 'C12@100(8)', '23C25;39C25 6/30', 'NC16@100/150']);
    s += text(411, 274, 'C25', y, 10) + text(411, 472, 'C25', y, 10) + text(646, 280, '1600x2000', y, 10) + text(646, 477, '1600x2000', y, 10) + text(727, 234, '1600', y, 10);
    s += text(490, 219, '100', '#eee', 11, -90) + text(490, 461, '12000', '#eee', 11, -90) + text(651, 217, '1200', '#eee', 11, -90) + text(651, 261, '1200', '#eee', 11, -90);
    s += text(711, 471, '12000', '#fff', 17, -90, 'n') + text(603, 231, 'K', '#fff', 18, 0, 'n') + text(606, 673, 'J', '#fff', 17, 0, 'n');
    s += text(769, 175, '1/01', '#fff', 17, 0, 'n') + text(769, 685, '1/01', '#fff', 17, 0, 'n') + text(893, 175, '1', '#fff', 17, 0, 'n') + text(1218, 176, '2', '#fff', 17, 0, 'n')
        + text(893, 686, '1', '#fff', 17, 0, 'n') + text(1218, 686, '2', '#fff', 17, 0, 'n') + text(816, 654, '239', '#fff', 16, 0, 'n');
    s += text(814, 177, '2014', '#d8d800', 10) + text(813, 208, '2040', '#d8d800', 10) + text(812, 254, '1100', y, 10);
    s += text(812, 297, '2CTa', y, 11) + text(812, 312, '4800x2800x1600/1100/2040-2014', y, 11) + text(812, 328, 'XC25@100', y, 10) + text(812, 343, 'YC16@100', y, 10);
    s += text(919, 305, '1800', '#eee', 11) + text(994, 270, '7391', '#eee', 13, -25) + text(846, 391, 'JL2', '#f0f', 11);
    for (const [tx, ty, t] of [[1058, 182, '3150'], [1058, 298, '3150'], [1315, 182, '3150'], [1315, 298, '3150'], [1125, 381, '1400'], [1276, 561, '1500'], [1305, 640, '2600'], [1149, 667, '1050'], [1149, 693, '50']])
        s += text(tx, ty, t, '#eee', 12, -90);
    s += text(1044, 554, 'JL2', '#f0f', 11, -90) + text(1059, 554, '1600x1500', y, 10, -90) + text(1073, 554, 'C12@100(16)', y, 10, -90) + text(1087, 554, 'T:20C25  ;B:25C25', y, 10, -90) + text(1104, 554, 'N6C16', y, 10, -90);
    s += text(872, 522, 'JZL-2 [1159 1600*1500', '#e070c0', 8, -90) + text(883, 522, 'C12@100(8) 20C25;25C25', '#e070c0', 8, -90) + text(893, 522, 'N6C16', '#e070c0', 8, -90);
    s += text(924, 543, 'CT3', '#eee', 15) + text(1208, 579, 'CT1', '#eee', 13) + text(1337, 550, 'K2', '#b09060', 14) + text(1324, 475, '1500', '#eee', 12);
    s += text(812, 575, '577', '#eee', 14, -90) + text(811, 655, '1875', '#eee', 13, -90) + text(755, 589, '400', '#eee', 11) + text(1324, 200, '烯', '#eee', 17, 0, 'n');
    s += text(457, 612, 'Y', '#0f0', 13, 0, 'n') + text(493, 647, 'X', '#f00', 13, 0, 'n');
    // collapse handles
    s += '<path fill="#505050" d="M412 395l12 3q4 2 4 6v40q0 4-4 6l-12 4zM987 692l4-13q1-3 4-3h46q3 0 4 3l4 13z"/><path stroke="#aaa" d="M422 421l-4 5 4 5M1013 682l5 5 5-5"/>';
    return s;
}

define('cad-canvas', `
:host { display: block; flex: 1; min-height: 0; background: #000; overflow: hidden; }
svg { display: block; width: 100%; height: 100%; }
text { font-family: "Liberation Sans", "Noto Sans CJK SC", sans-serif; stroke: none; white-space: pre; }
text.n { font-family: "Noto Sans", "Noto Sans CJK SC", sans-serif; }
`, () => `<svg role="img" aria-label="结构平面图"><defs>
<pattern id="hex" width="36" height="20" patternUnits="userSpaceOnUse" x="14" y="7"><path fill="none" stroke="#c8c8c8" stroke-width="1.200" d="M0 10L6 0M6 20L0 10M24 10L18 0M18 20L24 10M24 10H36M6 0H18M6 20H18"/></pattern>
<pattern id="hexs" width="28" height="16" patternUnits="userSpaceOnUse" x="8" y="9"><path fill="none" stroke="#c8c8c8" stroke-width="1.200" d="M0 8L5 0M5 16L0 8M19 8L14 0M14 16L19 8M19 8H28M5 0H14M5 16H14"/></pattern>
<pattern id="diag" width="20" height="37" patternUnits="userSpaceOnUse" x="17" y="515"><path fill="none" stroke="#ddd" d="M0 37L37 0M-20 37L17 0"/></pattern>
<pattern id="dia" width="16" height="18" patternUnits="userSpaceOnUse" x="0" y="1"><path fill="none" stroke="#f02020" stroke-width="1.200" d="M-1 -1L17 19M17 -1L-1 19"/></pattern>
<pattern id="zig" width="12" height="11" patternUnits="userSpaceOnUse" x="4" y="8"><path fill="none" stroke="#10d0e0" stroke-width="1.200" d="M0 0L12 11M12 0L0 11"/></pattern>
<pattern id="zigv" width="10" height="13" patternUnits="userSpaceOnUse" x="1" y="0"><path fill="none" stroke="#20d0e0" d="M0 0L10 13M10 0L0 13"/></pattern>
<pattern id="hatch" width="4" height="3" patternUnits="userSpaceOnUse" patternTransform="rotate(15)"><path stroke="#20d8d8" stroke-width="1.500" d="M0 1H4"/></pattern>
</defs><g transform="translate(-412 -157)" fill="none">${drawing()}</g></svg>`);

// ---------- rebar editor ----------
const GRADE = '<svg class="grade" width="10" height="11" fill="none" stroke="#111"><path d="M5 0v11M1 10.500h8"/><rect x="1" y="3" width="8" height="4"/></svg>';
const bar = '<path stroke="#000" stroke-width="2" d="M18 31H211"/><text x="105" y="25" fill="#e01020">13266</text>';
const REBARS = [
    ['1跨.下通长筋1', 25, 64, '<path fill="none" stroke="#000" stroke-width="2" d="M40 14V30H189V14"/><text x="15" y="26">375</text><text x="193" y="27">375</text><text x="98" y="26" fill="#e01020">13266</text>',
        '2587-40+15*d<br>+7609+3150-40+15*d', '锚固+净长<br>+锚固', '115', 13901, 20, 1, 0, '53.519'],
    ['1跨. 侧面受扭筋1', 16, 1, bar, '2587-40+7609+3150-40', '锚固+净长<br>+锚固', '(0)', 13266, 6, 0, 0, '20.96'],
    ['1跨. 上部钢筋1', 25, 1, bar, '2587-40+7609+3150-40', '锚固+净长<br>+锚固', '(0)', 13266, 25, 1, 0, '51.074'],
    ['1跨. 箍筋1', 12, 195, '<path fill="none" stroke="#000" stroke-width="2" d="M105 4H166V43H105zM143 24L158 5M154 40L166 11" style="display:none"/><path fill="none" stroke="#000" stroke-width="2" d="M105 4H166V43H105zM143 15L158 5M154 25L166 11"/><text class="l" x="55" y="29">1420</text><text class="l" x="107" y="35" fill="#e01020">1520</text>'.replace(/<path[^>]*display:none"\/>/, ''),
        '2*((1600-2*40)+(1500-2*40)<br>)+2*(12.89*d)', '', '82', 6107, 26, 0, 0, '5.423'],
];
const HEADS = ['筋号', '直径(mm)', '级别', '图号', '图形', '计算公式', '公式描述', '弯曲调整', '长度', '根数', '搭接', '损耗(%)', '单重(kg)'];
const WIDTHS = [15, 73, 56, 36, 33, 216, 166, 61, 38, 39, 49, 61, 61];

define('rebar-editor', `
:host { display: flex; flex-direction: column; flex: 1; min-height: 0; }
.tools { display: flex; align-items: center; flex: none; height: 28px; padding: 1px 0 0 6px; white-space: nowrap; border-bottom: 1px solid #e0e0e0; }
.steps { display: flex; gap: 16px; margin-right: 16px; }
.boxes { display: flex; gap: 12px; margin-right: 11px; }
.tools > tool-item { margin-right: 13px; }
.other { display: flex; align-items: center; gap: 5px; margin-right: 12px; }
.view { flex: 1; min-height: 0; overflow: hidden; }
table { width: 100%; table-layout: fixed; border-spacing: 0; }
th, td { padding: 0 2px; border-right: 1px solid #d8dcdc; border-bottom: 1px solid #d8dcdc; text-align: left; font-weight: 400; overflow: hidden; }
thead th { height: 21px; padding: 0; background: #fff; }
thead div { display: flex; align-items: center; justify-content: center; height: 20px; padding-top: 1px; line-height: 14px; text-align: center; overflow: hidden; white-space: nowrap; }
thead th:nth-child(9) div { white-space: normal; }
thead .on { background: #7db8f8; color: #fff; font-weight: 600; }
tbody td { height: 46px; background: #c1dfe1; color: #000; font: 10px/14px "DejaVu Sans Mono", monospace; }
tbody th { height: 46px; background: #f0f0f0; text-align: center; padding: 0; color: #555; }
tbody tr:first-child th { background: #7db8f8; color: #fff; font-weight: 600; }
td.cjk { font: 12px/14px "Noto Sans CJK SC", sans-serif; }
tr:first-child td.name { border: 1px solid #808080; border-width: 1px 2px 2px 1px; line-height: 16px; }
td.pic { padding: 0; }
td.pic svg { display: block; width: 100%; height: 45px; font: 13px "Liberation Serif", serif; }
.grade { display: block; margin-left: 3px; }
td.pic .l { font-size: 20px; }
.scroll { flex: none; width: 91%; height: 4px; margin: 4px 0 4px 13px; border-radius: 2px; background: #e6e6e6; }
`, () => `<div class="tools"><span class="steps">${['first', 'prev', 'next', 'last'].map(i => `<tool-item icon="${i}"></tool-item>`).join('')}</span>
<span class="boxes"><tool-item icon="up"></tool-item><tool-item icon="down"></tool-item></span>
<tool-item icon="insert">插入</tool-item><tool-item icon="trash">删除</tool-item><tool-item icon="ruler">缩尺配筋</tool-item><tool-item icon="info">钢筋信息</tool-item><tool-item icon="lib">钢筋图库</tool-item>
<button class="other">其他 <ui-caret></ui-caret></button><span>单构件钢筋总重(kg)：6478.599</span></div>
<div class="view"><table><colgroup>${WIDTHS.map(w => `<col style="width:${w}px">`).join('')}<col></colgroup>
<thead><tr><th></th>${HEADS.map((h, i) => `<th class="${i ? '' : 'on'}"><div>${h}</div></th>`).join('')}</tr></thead>
<tbody>${REBARS.map((r, i) => `<tr><th>${i + 1}</th><td class="cjk name">${r[0]}</td><td>${r[1]}</td><td>${GRADE}</td><td>${r[2]}</td>
<td class="pic"><svg>${r[3]}</svg></td><td>${r[4]}</td><td class="cjk">${r[5]}</td>${r.slice(6).map(v => `<td>${v}</td>`).join('')}</tr>`).join('')}
<tr><th></th><td></td><td></td><td></td><td></td><td class="pic"><svg><path fill="none" stroke="#000" stroke-width="2" d="M105 20V4H166V20M152 8l6-3"/></svg></td>${'<td></td>'.repeat(8)}</tr></tbody></table></div>
<div class="scroll"></div>`);

// ---------- markup over drawing and table ----------
define('mark-overlay', `
:host { position: absolute; inset: 0; pointer-events: none; overflow: hidden; }
svg { display: block; width: 100%; height: 100%; }
`, `<svg aria-hidden="true"><g transform="translate(-412 -157)" fill="none" stroke="#fb2414" stroke-width="2.500">
<rect x="706" y="777" width="79" height="44" rx="2"/><rect x="720" y="829" width="66" height="66" rx="2"/>
<path fill="#fb2414" stroke="none" d="M916 548L900 591 855 693 804 826l4 2-12 12-1-16 5 1L851 692 897 590z"/></g></svg>`);

// ---------- status bar ----------
define('status-bar', `
:host { display: flex; align-items: center; height: 30px; padding-top: 1px; background: #fafafa; overflow: hidden; white-space: nowrap; }
.t { display: flex; flex: none; padding-top: 1px; white-space: pre; }
.t:first-of-type { margin-left: -5px; width: 91px; }
.elev { width: 140px; }
.picked { width: 110px; }
.tools { display: flex; gap: 4px; margin-left: 42px; }
button { display: flex; align-items: center; justify-content: center; gap: 4px; width: 25px; height: 25px; border: 1px solid #999; border-radius: 3px; background: #fff; }
button.wide { width: 36px; }
button.on { background: #d3e4fb; border-color: #4a90e8; }
button.gap { margin-left: 2px; }
.tip { display: flex; align-items: center; gap: 3px; margin-left: 13px; padding-top: 1px; }
`, `<span class="t">层高：  3</span><span class="t elev">标高：  -19.85~-16.85</span><span class="t picked">选中图元：1(9)</span><span class="t">隐藏图元：0</span>
<span class="tools"><button aria-label="正交"><ui-icon name="ortho"></ui-icon></button><button class="wide on" aria-label="捕捉"><ui-icon name="snaprect"></ui-icon><ui-caret></ui-caret></button>
<button class="gap" aria-label="交点"><ui-icon name="cross"></ui-icon></button><button class="wide gap" aria-label="角度"><ui-icon name="angle"></ui-icon><ui-caret></ui-caret></button>
<button class="wide" aria-label="动态输入"><ui-icon name="plusbox"></ui-icon><ui-caret></ui-caret></button><button aria-label="选择"><ui-icon name="selbox"></ui-icon></button><button aria-label="弧线"><ui-icon name="curve"></ui-icon></button></span>
<span class="tip"><ui-icon name="diag"></ui-icon>按鼠标左键指定第一个角点，或拾取构件图元</span>`);

// ---------- page ----------
define('cad-app', `
:host { display: grid; grid-template-rows: 25px 101px 31px minmax(0, 1fr) 30px; height: 100vh; }
main { display: grid; grid-template-columns: 124px 280px minmax(0, 1fr); column-gap: 4px; min-height: 0; }
.side { display: grid; grid-template-rows: 350px minmax(0, 1fr); row-gap: 4px; min-height: 0; }
.work { position: relative; display: flex; flex-direction: column; min-width: 0; min-height: 0; }
.work dock-panel { flex: none; height: 282px; margin-top: 4px; border-left: 0; border-right: 0; }
`, `<menu-tabs></menu-tabs><ribbon-bar></ribbon-bar><selector-bar></selector-bar>
<main>
<dock-panel edge tabs="导航栏"><nav-list></nav-list></dock-panel>
<div class="side">
<dock-panel tabs="构件列表,图纸管理" active="构件列表"><component-list></component-list></dock-panel>
<dock-panel tabs="属性列表,图层管理" active="图层管理"><layer-table></layer-table></dock-panel>
</div>
<div class="work"><cad-canvas></cad-canvas>
<dock-panel plain tabs="编辑钢筋"><rebar-editor></rebar-editor></dock-panel>
<mark-overlay></mark-overlay></div>
</main>
<status-bar></status-bar>`);
</script>
</body>
</html>
